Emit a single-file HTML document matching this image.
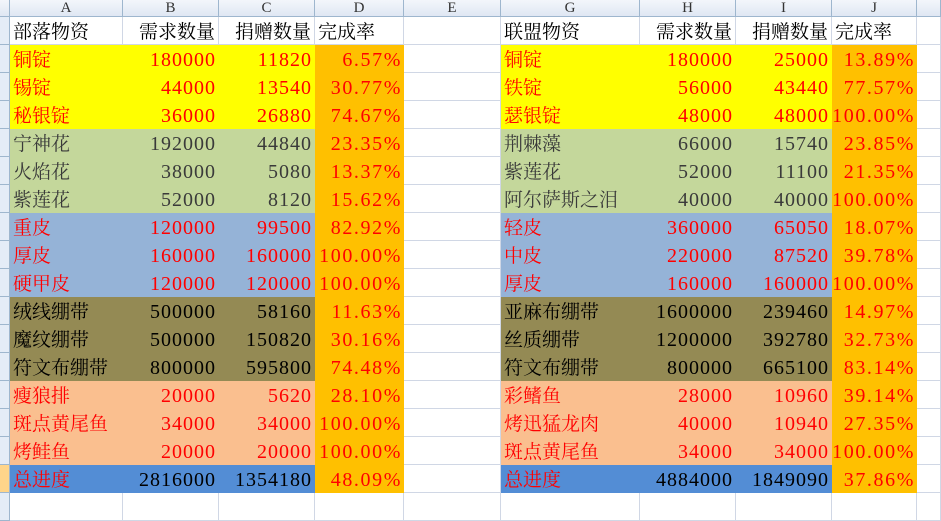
<!DOCTYPE html>
<html><head><meta charset="utf-8"><style>
body{margin:0;width:941px;height:515px;overflow:hidden;background:#fff;font-family:"Liberation Serif","Noto Serif CJK SC",serif}
.g{display:grid;grid-template-columns:10px 113px 96px 96px 89px 97px 139px 96px 96px 85px 24px;grid-template-rows:17px repeat(18,28px)}
.g>div{box-sizing:border-box;border-right:1px solid #d0d7e5;border-bottom:1px solid #d0d7e5;white-space:nowrap;overflow:hidden;font-size:19px;line-height:27px;padding:2px 3px 0;color:#ff0000}
.g>div.h{font-size:15px;line-height:16px;color:#333;text-align:center;background:linear-gradient(#f3f6fb,#dfe7f3);border-color:#9eb6ce;padding:0}
.g>div.rh{background:#e4ecf7;border-color:#9eb6ce;padding:0}
.g>div.n{text-align:right;font-size:20px;letter-spacing:1px;padding-right:2px;padding-left:0}
.g>div.k{color:#000}
.g>div.r{text-align:right}
.Y{background:#ffff00;border-color:#ffff00!important}
.G{background:#c4d79b;border-color:#c4d79b!important;color:#3a3a3a!important}
.B{background:#95b3d7;border-color:#95b3d7!important}
.O{background:#948a54;border-color:#948a54!important;color:#000!important}
.S{background:#fabf8f;border-color:#fabf8f!important}
.T{background:#538dd5;border-color:#538dd5!important;color:#000!important}
.T.t{color:#ff0000!important}
.g>div.p{background:#ffc000;border-color:#ffc000;color:#ff0000;letter-spacing:1.6px;padding-right:1px}
.g>div.sel{background:#ffd58a}
</style></head><body>
<div class="g">
<div class="h"></div><div class="h">A</div><div class="h">B</div><div class="h">C</div><div class="h">D</div><div class="h">E</div><div class="h">G</div><div class="h">H</div><div class="h">I</div><div class="h">J</div><div class="h"></div>
<div class="rh"></div><div class="k">部落物资</div><div class="k r">需求数量</div><div class="k r">捐赠数量</div><div class="k">完成率</div><div></div><div class="k">联盟物资</div><div class="k r">需求数量</div><div class="k r">捐赠数量</div><div class="k">完成率</div><div></div>
<div class="rh"></div><div class="Y t">铜锭</div><div class="Y n">180000</div><div class="Y n">11820</div><div class="n p">6.57%</div><div></div><div class="Y t">铜锭</div><div class="Y n">180000</div><div class="Y n">25000</div><div class="n p">13.89%</div><div></div>
<div class="rh"></div><div class="Y t">锡锭</div><div class="Y n">44000</div><div class="Y n">13540</div><div class="n p">30.77%</div><div></div><div class="Y t">铁锭</div><div class="Y n">56000</div><div class="Y n">43440</div><div class="n p">77.57%</div><div></div>
<div class="rh"></div><div class="Y t">秘银锭</div><div class="Y n">36000</div><div class="Y n">26880</div><div class="n p">74.67%</div><div></div><div class="Y t">瑟银锭</div><div class="Y n">48000</div><div class="Y n">48000</div><div class="n p">100.00%</div><div></div>
<div class="rh"></div><div class="G t">宁神花</div><div class="G n">192000</div><div class="G n">44840</div><div class="n p">23.35%</div><div></div><div class="G t">荆棘藻</div><div class="G n">66000</div><div class="G n">15740</div><div class="n p">23.85%</div><div></div>
<div class="rh"></div><div class="G t">火焰花</div><div class="G n">38000</div><div class="G n">5080</div><div class="n p">13.37%</div><div></div><div class="G t">紫莲花</div><div class="G n">52000</div><div class="G n">11100</div><div class="n p">21.35%</div><div></div>
<div class="rh"></div><div class="G t">紫莲花</div><div class="G n">52000</div><div class="G n">8120</div><div class="n p">15.62%</div><div></div><div class="G t">阿尔萨斯之泪</div><div class="G n">40000</div><div class="G n">40000</div><div class="n p">100.00%</div><div></div>
<div class="rh"></div><div class="B t">重皮</div><div class="B n">120000</div><div class="B n">99500</div><div class="n p">82.92%</div><div></div><div class="B t">轻皮</div><div class="B n">360000</div><div class="B n">65050</div><div class="n p">18.07%</div><div></div>
<div class="rh"></div><div class="B t">厚皮</div><div class="B n">160000</div><div class="B n">160000</div><div class="n p">100.00%</div><div></div><div class="B t">中皮</div><div class="B n">220000</div><div class="B n">87520</div><div class="n p">39.78%</div><div></div>
<div class="rh"></div><div class="B t">硬甲皮</div><div class="B n">120000</div><div class="B n">120000</div><div class="n p">100.00%</div><div></div><div class="B t">厚皮</div><div class="B n">160000</div><div class="B n">160000</div><div class="n p">100.00%</div><div></div>
<div class="rh"></div><div class="O t">绒线绷带</div><div class="O n">500000</div><div class="O n">58160</div><div class="n p">11.63%</div><div></div><div class="O t">亚麻布绷带</div><div class="O n">1600000</div><div class="O n">239460</div><div class="n p">14.97%</div><div></div>
<div class="rh"></div><div class="O t">魔纹绷带</div><div class="O n">500000</div><div class="O n">150820</div><div class="n p">30.16%</div><div></div><div class="O t">丝质绷带</div><div class="O n">1200000</div><div class="O n">392780</div><div class="n p">32.73%</div><div></div>
<div class="rh"></div><div class="O t">符文布绷带</div><div class="O n">800000</div><div class="O n">595800</div><div class="n p">74.48%</div><div></div><div class="O t">符文布绷带</div><div class="O n">800000</div><div class="O n">665100</div><div class="n p">83.14%</div><div></div>
<div class="rh"></div><div class="S t">瘦狼排</div><div class="S n">20000</div><div class="S n">5620</div><div class="n p">28.10%</div><div></div><div class="S t">彩鳍鱼</div><div class="S n">28000</div><div class="S n">10960</div><div class="n p">39.14%</div><div></div>
<div class="rh"></div><div class="S t">斑点黄尾鱼</div><div class="S n">34000</div><div class="S n">34000</div><div class="n p">100.00%</div><div></div><div class="S t">烤迅猛龙肉</div><div class="S n">40000</div><div class="S n">10940</div><div class="n p">27.35%</div><div></div>
<div class="rh"></div><div class="S t">烤鲑鱼</div><div class="S n">20000</div><div class="S n">20000</div><div class="n p">100.00%</div><div></div><div class="S t">斑点黄尾鱼</div><div class="S n">34000</div><div class="S n">34000</div><div class="n p">100.00%</div><div></div>
<div class="rh sel"></div><div class="T t">总进度</div><div class="T n">2816000</div><div class="T n">1354180</div><div class="n p">48.09%</div><div></div><div class="T t">总进度</div><div class="T n">4884000</div><div class="T n">1849090</div><div class="n p">37.86%</div><div></div>
<div class="rh"></div><div></div><div></div><div></div><div></div><div></div><div></div><div></div><div></div><div></div><div></div>
</div>
</body></html>
